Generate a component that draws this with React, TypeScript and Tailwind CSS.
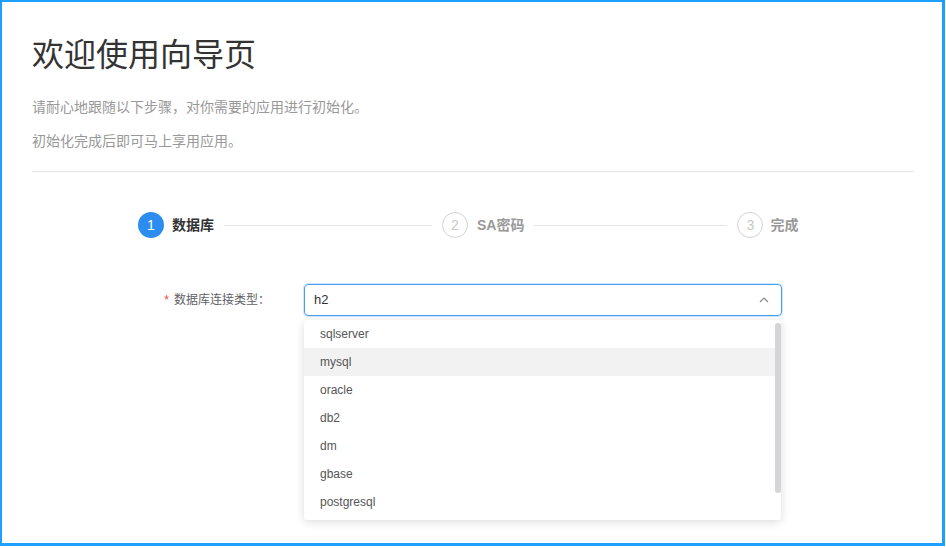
import React from 'react'

const font = { fontFamily: '"Liberation Sans", "Noto Sans CJK SC", sans-serif' }

const options = ['sqlserver', 'mysql', 'oracle', 'db2', 'dm', 'gbase', 'postgresql']

function StepCircle({ n, active }: { n: number; active?: boolean }) {
  if (active) {
    return (
      <div className="flex h-[26px] w-[26px] shrink-0 items-center justify-center rounded-full bg-[#2d8cf0] text-[14px] text-white">
        {n}
      </div>
    )
  }
  return (
    <div className="flex h-[26px] w-[26px] shrink-0 items-center justify-center rounded-full border-[1.5px] border-[#d4d4d4] text-[14px] text-[#c8c8c8]">
      {n}
    </div>
  )
}

export default function App() {
  return (
    <div className="h-[548px] w-[946px] overflow-hidden bg-white" style={font}>
      <div className="relative -ml-px -mt-px h-[547px] w-[946px] border-[3px] border-[#1e9fff] bg-white pl-[30px] pr-[28px] pt-[29px]">
        <h1 className="text-[32px] leading-[48px] font-normal text-[#333]">欢迎使用向导页</h1>
        <p className="mt-[18px] text-[14px] leading-[20px] text-[#999]">
          请耐心地跟随以下步骤，对你需要的应用进行初始化。
        </p>
        <p className="mt-[14px] text-[14px] leading-[20px] text-[#999]">初始化完成后即可马上享用应用。</p>
        <div className="mt-[20px] border-t border-[#e6e6e6]" />

        <div className="ml-[106px] mt-[40px] flex h-[26px] items-center">
          <StepCircle n={1} active />
          <span className="ml-[8px] text-[14px] font-bold text-[#333]">数据库</span>
          <div className="ml-[10px] h-px w-[208px] bg-[#e6e6e6]" />
          <div className="ml-[10px]">
            <StepCircle n={2} />
          </div>
          <span className="ml-[9px] text-[14px] font-bold text-[#999]">SA密码</span>
          <div className="ml-[10px] h-px w-[193px] bg-[#e6e6e6]" />
          <div className="ml-[10px]">
            <StepCircle n={3} />
          </div>
          <span className="ml-[7px] text-[14px] font-bold text-[#999]">完成</span>
        </div>

        <div className="mt-[46px] flex h-[32px] items-center">
          <label className="w-[272px] pr-[34px] text-right text-[12px] text-[#606266]">
            <span className="mr-[5px] text-[#f5462c]">*</span>数据库连接类型：
          </label>
          <div className="flex h-[32px] w-[478px] items-center justify-between rounded-[4px] border border-[#4a9ff5] pl-[9px] pr-[12px] shadow-[0_0_0_1px_rgba(64,158,255,0.25)]">
            <span className="text-[13px] text-[#333]">h2</span>
            <svg width="10" height="6" viewBox="0 0 10 6" fill="none">
              <path d="M1 5L5 1L9 5" stroke="#888" strokeWidth="1.2" />
            </svg>
          </div>
        </div>

        <div className="absolute left-[302px] top-[318px] w-[477px] rounded-[3px] bg-white pb-[4px] shadow-[0_2px_10px_rgba(0,0,0,0.14)]">
          {options.map((o) => (
            <div
              key={o}
              className={`flex h-[28px] items-center pl-[16px] text-[12px] text-[#555] ${o === 'mysql' ? 'mr-[6px] bg-[#f2f2f2]' : ''}`}
            >
              {o}
            </div>
          ))}
          <div className="absolute right-[0px] top-[3px] h-[170px] w-[6px] rounded-[3px] bg-[#d5d5d8]" />
        </div>
      </div>
    </div>
  )
}
